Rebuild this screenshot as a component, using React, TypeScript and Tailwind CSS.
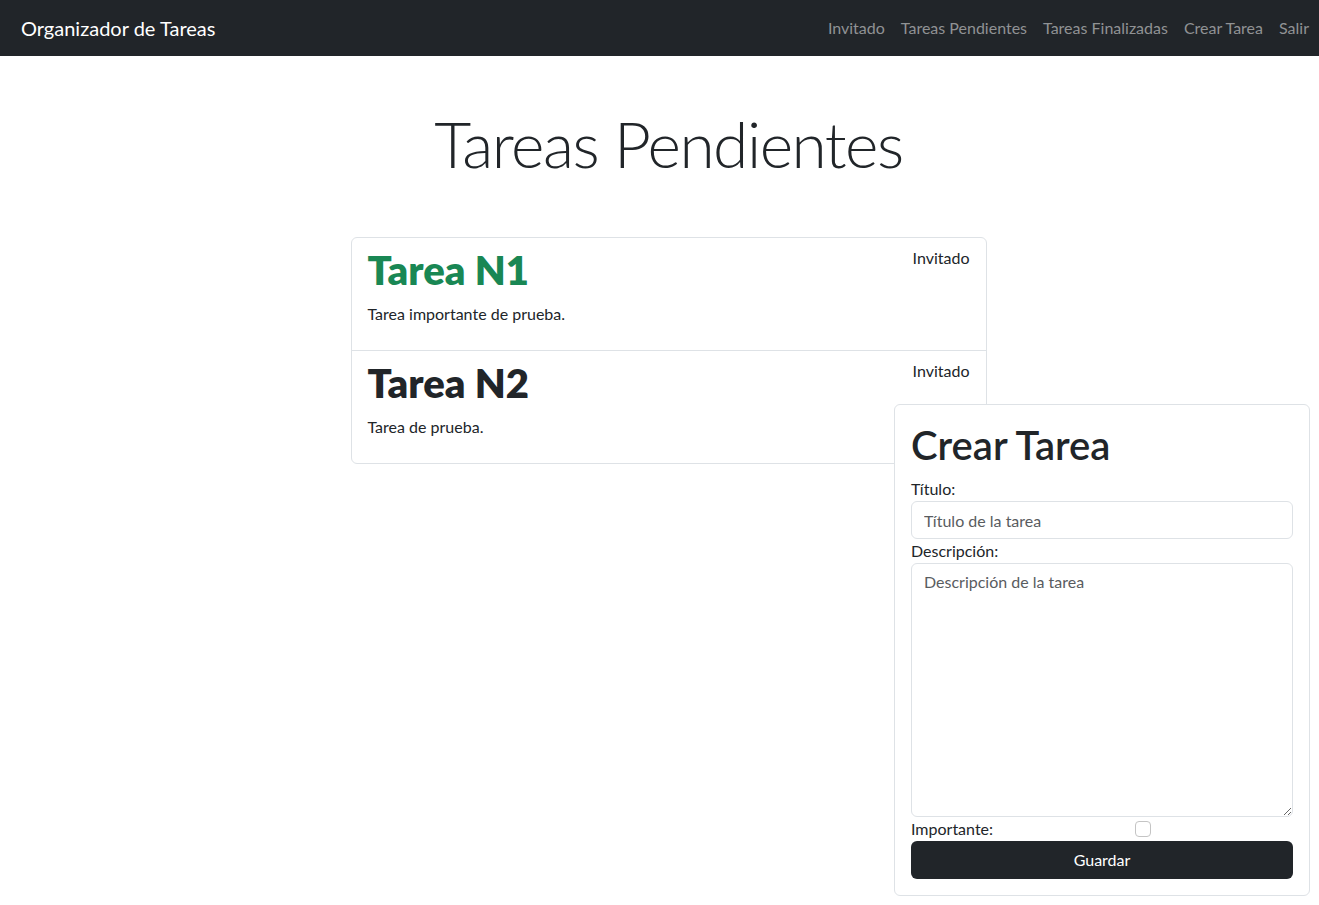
import React from "react";

const tasks = [
    { title: "Tarea N1", description: "Tarea importante de prueba.", user: "Invitado", important: true },
    { title: "Tarea N2", description: "Tarea de prueba.", user: "Invitado", important: false },
];

const links = ["Invitado", "Tareas Pendientes", "Tareas Finalizadas", "Crear Tarea", "Salir"];

export default function App() {
    return (
        <div className="relative min-h-[905px] bg-white text-[#212529] font-['Lato',sans-serif]">
            <nav className="flex h-[56px] items-center justify-between bg-[#212529] pl-[21px] pr-[10px]">
                <span className="text-[20px] text-white">Organizador de Tareas</span>
                <ul className="flex gap-4 text-[16px] text-[#909294]">
                    {links.map((link) => (
                        <li key={link}>{link}</li>
                    ))}
                </ul>
            </nav>

            <main className="flex flex-col items-center pl-[18px]">
                <h1 className="mt-[50px] mb-[54px] text-[64px] font-light leading-[1.2] tracking-[-1.5px]">Tareas Pendientes</h1>

                <div className="w-[636px] rounded-md border border-[#dee2e6]">
                    {tasks.map((task, i) => (
                        <div
                            key={task.title}
                            className={`flex justify-between px-4 py-2 ${i > 0 ? "border-t border-[#dee2e6]" : ""}`}
                        >
                            <div>
                                <h2 className={`mb-2 text-[40px] font-extrabold leading-[1.2] ${task.important ? "text-[#198754]" : ""}`}>
                                    {task.title}
                                </h2>
                                <p className="mb-4 text-[16px] leading-6">{task.description}</p>
                            </div>
                            <span className="text-[16px] leading-6">{task.user}</span>
                        </div>
                    ))}
                </div>
            </main>

            <form className="absolute right-[9px] top-[404px] w-[416px] rounded-md border border-[#dee2e6] bg-white p-4">
                <h2 className="mb-2 text-[40px] font-semibold leading-[1.2]">Crear Tarea</h2>
                <label htmlFor="titulo" className="block text-[16px] leading-6">Título:</label>
                <input
                    id="titulo"
                    type="text"
                    placeholder="Título de la tarea"
                    className="block h-[38px] w-full rounded-md border border-[#dee2e6] px-3 text-[16px] placeholder:text-[#595c5f] focus:outline-none"
                />
                <label htmlFor="descripcion" className="block text-[16px] leading-6">Descripción:</label>
                <textarea
                    id="descripcion"
                    placeholder="Descripción de la tarea"
                    className="block h-[254px] w-full rounded-md border border-[#dee2e6] px-3 py-1.5 text-[16px] placeholder:text-[#595c5f] focus:outline-none"
                />
                <div className="flex h-6 items-center">
                    <label htmlFor="importante" className="text-[16px] leading-6">Importante:</label>
                    <input
                        id="importante"
                        type="checkbox"
                        className="ml-[142px] h-4 w-4 appearance-none rounded border border-[#c4c4c4] bg-white"
                    />
                </div>
                <button
                    type="submit"
                    className="h-[38px] w-full rounded-md bg-[#212529] text-[16px] text-white"
                >
                    Guardar
                </button>
            </form>
        </div>
    );
}
